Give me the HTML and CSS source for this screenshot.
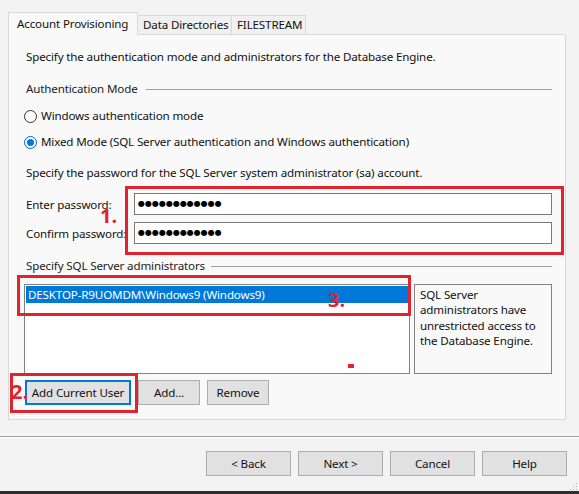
FILE: index.html
```html
<!DOCTYPE html>
<html>
<head>
<meta charset="utf-8">
<link rel="stylesheet" href="styles.css">
</head>
<body>
<div class="window">
  <div class="tabs">
    <div class="tab active">Account Provisioning</div>
    <div class="tab">Data Directories</div>
    <div class="tab">FILESTREAM</div>
  </div>
  <div class="panel">
    <div class="intro">Specify the authentication mode and administrators for the Database Engine.</div>
    <div class="group-head auth-head"><span>Authentication Mode</span><div class="rule"></div></div>
    <div class="radio-row first"><span class="radio"></span><span>Windows authentication mode</span></div>
    <div class="radio-row second"><span class="radio checked"></span><span>Mixed Mode (SQL Server authentication and Windows authentication)</span></div>
    <div class="pw-head">Specify the password for the SQL Server system administrator (sa) account.</div>
    <div class="field-row first-field"><span class="field-label">Enter password:</span><div class="pw-box">●●●●●●●●●●●●</div></div>
    <div class="field-row second-field"><span class="field-label">Confirm password:</span><div class="pw-box">●●●●●●●●●●●●</div></div>
    <div class="group-head admin-head"><span>Specify SQL Server administrators</span><div class="rule"></div></div>
    <div class="admin-row">
      <div class="listbox"><div class="list-item">DESKTOP-R9UOMDM\Windows9 (Windows9)</div></div>
      <div class="info-box">SQL Server administrators have unrestricted access to the Database Engine.</div>
    </div>
    <div class="admin-buttons">
      <div class="btn focused w-acu">Add Current User</div>
      <div class="btn w-add">Add...</div>
      <div class="btn w-rem">Remove</div>
    </div>
  </div>
  <div class="separator"></div>
  <div class="nav-buttons">
    <div class="btn nav">&lt; Back</div>
    <div class="btn nav">Next &gt;</div>
    <div class="btn nav">Cancel</div>
    <div class="btn nav">Help</div>
  </div>
  <div class="bottom-bar"></div>

  <div class="mark box1"></div>
  <div class="mark box2"></div>
  <div class="mark box3"></div>
  <div class="num n1">1.</div>
  <div class="num n2">2.</div>
  <div class="num n3">3.</div>
  <div class="dot-mark"></div>
  <svg class="grip" width="10" height="10" viewBox="0 0 10 10">
    <rect x="8" y="2" width="1" height="1" fill="#b0b0b0"/>
    <rect x="5" y="5" width="1" height="1" fill="#b0b0b0"/>
    <rect x="8" y="5" width="1" height="1" fill="#b0b0b0"/>
    <rect x="2" y="8" width="1" height="1" fill="#b0b0b0"/>
    <rect x="5" y="8" width="1" height="1" fill="#b0b0b0"/>
    <rect x="8" y="8" width="1" height="1" fill="#b0b0b0"/>
  </svg>
</div>
</body>
</html>
```

FILE: styles.css
```css
html, body {
  margin: 0;
  padding: 0;
}
body {
  width: 579px;
  height: 494px;
  overflow: hidden;
  background: #f3f3f3;
  font-family: "Noto Sans", "Open Sans", sans-serif;
  font-size: 11.6px;
  letter-spacing: -0.15px;
  color: #111;
}
.window {
  position: relative;
  width: 579px;
  height: 494px;
  padding-top: 12px;
  box-sizing: border-box;
}
.tabs {
  display: flex;
  align-items: flex-end;
  margin-left: 8px;
  height: 22px;
  position: relative;
  z-index: 2;
}
.tab {
  height: 19px;
  line-height: 18px;
  padding: 0 0 0 5px;
  border: 1px solid #d9d9d9;
  border-bottom: none;
  background: #f0f0f0;
  box-sizing: border-box;
  margin-left: -1px;
  white-space: nowrap;
  overflow: hidden;
}
.tab:first-child { margin-left: 0; }
.tab.active {
  height: 23px;
  margin-bottom: -1px;
  line-height: 21px;
  background: #f9f9f9;
  padding-left: 8px;
  width: 130px;
}
.tab:nth-child(2) { width: 95px; }
.tab:nth-child(3) { width: 75px; }
.panel {
  margin-left: 8px;
  width: 558px;
  height: 386px;
  box-sizing: border-box;
  border: 1px solid #d9d9d9;
  background: #f9f9f9;
  padding: 0 13px 0 17px;
  display: flex;
  flex-direction: column;
}
.intro { margin-top: 14px; line-height: 16px; height: 16px; white-space: nowrap; }
.group-head {
  display: flex;
  align-items: center;
  gap: 6px;
  height: 16px;
  line-height: 16px;
  color: #222;
  white-space: nowrap;
}
.rule { flex: 1; height: 1px; background: #a0a0a0; margin-left: 2px; }
.admin-head .rule { margin-left: 0; }
.auth-head { margin-top: 16px; }
.radio-row {
  display: flex;
  align-items: center;
  height: 16px;
  line-height: 16px;
  margin-left: -2px;
  white-space: nowrap;
}
.radio-row.first { margin-top: 11px; }
.radio-row.second { margin-top: 10px; }
.radio {
  width: 13px;
  height: 13px;
  border: 1px solid #333;
  border-radius: 50%;
  box-sizing: border-box;
  margin-right: 4px;
  background: #fff;
  position: relative;
  flex: none;
}
.radio.checked { border-color: #0060c0; }
.radio.checked::after {
  content: "";
  position: absolute;
  left: 2px; top: 2px;
  width: 7px; height: 7px;
  border-radius: 50%;
  background: #0078d7;
}
.pw-head { margin-top: 15px; line-height: 16px; height: 16px; white-space: nowrap; }
.field-row {
  display: flex;
  align-items: center;
  height: 22px;
  white-space: nowrap;
}
.first-field { margin-top: 12px; }
.second-field { margin-top: 7px; }
.field-label { width: 108px; flex: none; }
.pw-box {
  flex: 1;
  height: 22px;
  box-sizing: border-box;
  border: 1px solid #7a7a7a;
  background: #fff;
  padding-left: 3px;
  font-family: "DejaVu Sans", sans-serif;
  font-size: 8px;
  line-height: 20px;
  letter-spacing: 0;
  color: #000;
}
.admin-head { margin-top: 14px; }
.admin-row {
  display: flex;
  gap: 4px;
  margin-top: 10px;
  margin-left: -2px;
  height: 90px;
}
.listbox {
  width: 386px;
  height: 90px;
  box-sizing: border-box;
  border: 1px solid #828282;
  background: #fff;
  padding: 1px;
}
.list-item {
  height: 17px;
  line-height: 17px;
  background: #0078d7;
  color: #fff;
  padding-left: 2px;
  white-space: nowrap;
}
.info-box {
  flex: 1;
  box-sizing: border-box;
  border: 1px solid #828282;
  padding: 2px 6px 0 5px;
  line-height: 15.3px;
}
.admin-buttons {
  display: flex;
  gap: 7px;
  margin-top: 6px;
  margin-left: -1px;
}
.btn {
  height: 25px;
  box-sizing: border-box;
  border: 1px solid #adadad;
  background: #e1e1e1;
  display: flex;
  align-items: center;
  justify-content: center;
  line-height: 1;
  white-space: nowrap;
}
.btn.focused { border: 2px solid #0078d7; }
.w-acu { width: 106px; }
.w-add { width: 62px; }
.w-rem { width: 62px; }
.separator {
  margin-top: 16px;
  height: 1px;
  background: #a0a0a0;
  border-bottom: 1px solid #fff;
}
.nav-buttons {
  display: flex;
  justify-content: flex-end;
  gap: 7px;
  margin-top: 13px;
  margin-right: 12px;
}
.btn.nav { width: 85px; height: 25px; }
.bottom-bar {
  position: absolute;
  left: 0; right: 0; bottom: 0;
  height: 3px;
  background: #2e2e2e;
}
.grip { position: absolute; right: 1px; bottom: 3px; }
.mark {
  position: absolute;
  border: 3px solid #e0232e;
  box-sizing: border-box;
}
.box1 { left: 125px; top: 186px; width: 439px; height: 69px; }
.box2 { left: 10px; top: 373px; width: 128px; height: 40px; }
.box3 { left: 17px; top: 275px; width: 394px; height: 41px; }
.num {
  position: absolute;
  color: #e0232e;
  font-family: "Open Sans", sans-serif;
  font-weight: 700;
  font-size: 20px;
  line-height: 20px;
  letter-spacing: 0;
}
.n1 { left: 100px; top: 206px; }
.n2 { left: 11px; top: 382px; }
.n3 { left: 328px; top: 290px; }
.dot-mark {
  position: absolute;
  left: 348px; top: 364px;
  width: 6px; height: 4px;
  background: #e0232e;
}
```
